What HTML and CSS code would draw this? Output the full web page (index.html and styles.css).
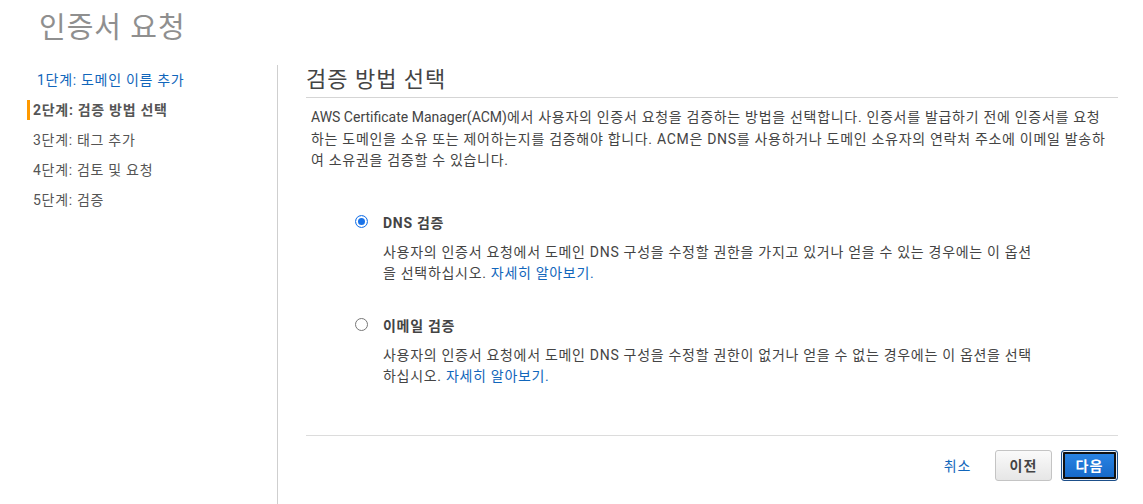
FILE: index.html
```html
<!DOCTYPE html>
<html lang="ko">
<head>
<meta charset="utf-8">
<title>인증서 요청</title>
<link rel="stylesheet" href="styles.css">
</head>
<body>
<h1 class="page-title">인증서 요청</h1>
<div class="layout">
  <nav class="steps">
    <a class="step step-link" href="#">1단계: 도메인 이름 추가</a>
    <div class="step step-active">2단계: 검증 방법 선택</div>
    <div class="step">3단계: 태그 추가</div>
    <div class="step">4단계: 검토 및 요청</div>
    <div class="step">5단계: 검증</div>
  </nav>
  <main class="content">
    <h2 class="section-title">검증 방법 선택</h2>
    <p class="intro"><span class="en">AWS Certificate Manager(ACM)</span>에서 사용자의 인증서 요청을 검증하는 방법을 선택합니다. 인증서를 발급하기 전에 인증서를 요청하는 도메인을 소유 또는 제어하는지를 검증해야 합니다. ACM은 DNS를 사용하거나 도메인 소유자의 연락처 주소에 이메일 발송하여 소유권을 검증할 수 있습니다.</p>
    <div class="options">
      <div class="option">
        <div class="option-head">
          <span class="radio radio-on"></span>
          <span class="option-label">DNS 검증</span>
        </div>
        <p class="option-desc">사용자의 인증서 요청에서 도메인 DNS 구성을 수정할 권한을 가지고 있거나 얻을 수 있는 경우에는 이 옵션을 선택하십시오. <a href="#" class="link">자세히 알아보기.</a></p>
      </div>
      <div class="option">
        <div class="option-head">
          <span class="radio"></span>
          <span class="option-label">이메일 검증</span>
        </div>
        <p class="option-desc">사용자의 인증서 요청에서 도메인 DNS 구성을 수정할 권한이 없거나 얻을 수 없는 경우에는 이 옵션을 선택하십시오. <a href="#" class="link">자세히 알아보기.</a></p>
      </div>
    </div>
    <div class="footer">
      <a href="#" class="cancel">취소</a>
      <button class="btn btn-secondary">이전</button>
      <button class="btn btn-primary">다음</button>
    </div>
  </main>
</div>
</body>
</html>
```
FILE: styles.css
```css
* { box-sizing: border-box; }
html, body { height: 100%; }
body {
  margin: 0;
  font-family: Roboto, "Noto Sans CJK KR", sans-serif;
  color: #444;
  font-size: 14px;
  letter-spacing: 0.7px;
  background: #fff;
  overflow: hidden;
}
.en { letter-spacing: 0; }
.page-title {
  margin: 0;
  padding: 10px 0 0 39px;
  height: 65px;
  font-size: 29px;
  font-weight: 400;
  color: #8f8f8f;
  line-height: 36px;
  letter-spacing: 1px;
}
.layout {
  display: flex;
  height: calc(100% - 65px);
}
.steps {
  width: 278px;
  flex: none;
  border-right: 1px solid #cfcfcf;
  display: flex;
  flex-direction: column;
}
.step {
  display: block;
  height: 30px;
  line-height: 30px;
  padding-left: 33px;
  font-size: 14px;
  color: #555;
  text-decoration: none;
}
.step-link {
  color: #1166bb;
  padding-left: 37px;
}
.step-active {
  font-weight: 700;
  border-left: 3px solid #f90;
  margin-left: 27px;
  padding-left: 3px;
  line-height: 20px;
  height: 20px;
  margin-top: 5px;
  margin-bottom: 5px;
}
.content {
  flex: 1;
  margin-left: 28px;
  margin-right: 25px;
  display: flex;
  flex-direction: column;
}
.section-title {
  margin: 0;
  font-size: 22px;
  font-weight: 400;
  line-height: 30px;
  height: 33px;
  color: #444;
  letter-spacing: 1px;
  border-bottom: 1px solid #d5d5d5;
}
.intro {
  margin: 9px 0 0 0;
  padding-left: 5px;
  padding-right: 6px;
  line-height: 21.5px;
  font-size: 14px;
  color: #444;
  word-break: break-all;
}
.options {
  padding-left: 49px;
  padding-top: 40px;
  display: flex;
  flex-direction: column;
  gap: 31px;
}
.option-head {
  display: flex;
  align-items: center;
  height: 20px;
}
.radio {
  width: 13px;
  height: 13px;
  border-radius: 50%;
  border: 1px solid #777;
  background: #fff;
  margin-right: 15px;
  flex: none;
}
.radio-on {
  border: 1px solid #1a73e8;
  box-shadow: inset 0 0 0 2px #fff, inset 0 0 0 6px #1a73e8;
}
.option-label {
  font-weight: 700;
  font-size: 14px;
  color: #444;
}
.option-desc {
  margin: 10px 0 0 28px;
  max-width: 662px;
  line-height: 21px;
  font-size: 14px;
  color: #444;
  word-break: break-all;
}
.link {
  color: #1166bb;
  text-decoration: none;
}
.footer {
  margin-top: 48px;
  border-top: 1px solid #dcdcdc;
  padding-top: 14px;
  display: flex;
  justify-content: flex-end;
  align-items: center;
}
.cancel {
  color: #1166bb;
  text-decoration: none;
  font-size: 14px;
  margin-right: 24px;
}
.btn {
  height: 31px;
  width: 57px;
  font-family: Roboto, "Noto Sans CJK KR", sans-serif;
  font-size: 14px;
  font-weight: 700;
  letter-spacing: 1px;
  border-radius: 3px;
  padding: 0;
  cursor: pointer;
}
.btn-secondary {
  background: linear-gradient(#fafafa, #e6e6e6);
  border: 1px solid #c4c4c4;
  color: #444;
  margin-right: 9px;
}
.btn-primary {
  background: linear-gradient(#2b86e6, #1466c6);
  border: 1px solid #1d4f8a;
  color: #fff;
  box-shadow: inset 0 0 0 1px #e6eef8, inset 0 0 0 3px #111;
}
```
